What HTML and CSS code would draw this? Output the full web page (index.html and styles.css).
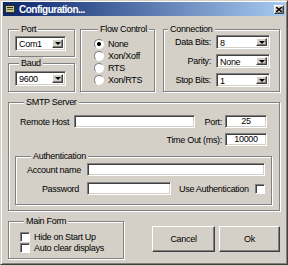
FILE: index.html
```html
<!DOCTYPE html>
<html lang="en">
<head>
    <meta charset="UTF-8">
    <title>Configuration...</title>
    <link rel="stylesheet" href="styles.css">
</head>
<body>
    <div class="window">
        <div class="titlebar">
            <svg class="app-icon" width="10" height="8" viewBox="0 0 10 8">
                <rect x="0.5" y="0.5" width="9" height="7" fill="#c8c89a" stroke="#303018"/>
                <rect x="2" y="2" width="6" height="1" fill="#303018"/>
                <rect x="2" y="4" width="6" height="1" fill="#606030"/>
            </svg>
            <span class="title">Configuration...</span>
            <span class="close-btn">
                <svg width="6" height="5" viewBox="0 0 6 5">
                    <path d="M0 0 L6 5 M6 0 L0 5" stroke="#000" stroke-width="1.4"/>
                </svg>
            </span>
        </div>

        <div class="client">
            <div class="top-row">
                <div class="col-left">
                    <fieldset class="group port-group">
                        <legend>Port</legend>
                        <div class="combo">
                            <span class="value">Com1</span>
                            <span class="drop"><i class="arrow"></i></span>
                        </div>
                    </fieldset>
                    <fieldset class="group baud-group">
                        <legend>Baud</legend>
                        <div class="combo">
                            <span class="value">9600</span>
                            <span class="drop"><i class="arrow"></i></span>
                        </div>
                    </fieldset>
                </div>

                <fieldset class="group flow-group">
                    <legend>Flow Control</legend>
                    <div class="option"><span class="radio on"></span>None</div>
                    <div class="option"><span class="radio"></span>Xon/Xoff</div>
                    <div class="option"><span class="radio"></span>RTS</div>
                    <div class="option"><span class="radio"></span>Xon/RTS</div>
                </fieldset>

                <fieldset class="group conn-group">
                    <legend>Connection</legend>
                    <div class="conn-row">
                        <label>Data Bits:</label>
                        <div class="combo small">
                            <span class="value">8</span>
                            <span class="drop"><i class="arrow"></i></span>
                        </div>
                    </div>
                    <div class="conn-row">
                        <label>Parity:</label>
                        <div class="combo small">
                            <span class="value">None</span>
                            <span class="drop"><i class="arrow"></i></span>
                        </div>
                    </div>
                    <div class="conn-row">
                        <label>Stop Bits:</label>
                        <div class="combo small">
                            <span class="value">1</span>
                            <span class="drop"><i class="arrow"></i></span>
                        </div>
                    </div>
                </fieldset>
            </div>

            <fieldset class="group smtp-group">
                <legend>SMTP Server</legend>
                <div class="smtp-row">
                    <label class="host-label">Remote Host</label>
                    <div class="edit host-edit"></div>
                    <label class="port-label">Port:</label>
                    <div class="edit num-edit">25</div>
                </div>
                <div class="smtp-row right">
                    <label>Time Out (ms):</label>
                    <div class="edit num-edit">10000</div>
                </div>

                <fieldset class="group auth-group">
                    <legend>Authentication</legend>
                    <div class="auth-row">
                        <label class="auth-label">Account name</label>
                        <div class="edit account-edit"></div>
                    </div>
                    <div class="auth-row">
                        <label class="auth-label pass">Password</label>
                        <div class="edit pass-edit"></div>
                        <label class="use-auth">Use Authentication</label>
                        <span class="check"></span>
                    </div>
                </fieldset>
            </fieldset>

            <div class="bottom-row">
                <fieldset class="group main-group">
                    <legend>Main Form</legend>
                    <div class="option"><span class="check"></span>Hide on Start Up</div>
                    <div class="option"><span class="check"></span>Auto clear displays</div>
                </fieldset>
                <div class="buttons">
                    <button class="btn cancel">Cancel</button>
                    <button class="btn ok">Ok</button>
                </div>
            </div>
        </div>
    </div>
</body>
</html>
```

FILE: styles.css
```css
body {
    margin: 0;
    background: #d4d0c8;
    font-family: "Liberation Sans", Arial, sans-serif;
    font-size: 9px;
    letter-spacing: -0.3px;
    white-space: nowrap;
    color: #000;
}
.window {
    width: 288px;
    height: 265px;
    box-sizing: border-box;
    background: #d4d0c8;
    border: 1px solid;
    border-color: #d4d0c8 #404040 #404040 #d4d0c8;
    box-shadow: inset 1px 1px #fff, inset -1px -1px #808080;
    padding: 1px 2px 2px 2px;
}
.titlebar {
    height: 14px;
    display: flex;
    align-items: center;
    padding: 0 1px 0 2px;
    background: linear-gradient(to right, #0a246a, #a6caf0);
}
.app-icon {
    margin-right: 4px;
}
.title {
    flex: 1;
    color: #fff;
    font-weight: bold;
    font-size: 10px;
    letter-spacing: -0.5px;
}
.close-btn {
    width: 10px;
    height: 9px;
    box-sizing: border-box;
    display: flex;
    align-items: center;
    justify-content: center;
    background: #d4d0c8;
    border: 1px solid;
    border-color: #fff #404040 #404040 #fff;
    box-shadow: inset -1px -1px #808080;
}

.client {
    padding: 7px 5px 0 5px;
}

/* group boxes */
.group {
    margin: 0;
    padding: 0;
    min-width: 0;
    box-sizing: border-box;
    border: 1px solid #808080;
    box-shadow: inset 1px 1px #fff, 1px 1px #fff;
}
legend {
    margin-left: 4px;
    padding: 0 2px;
    line-height: 12px;
    background: #d4d0c8;
}

.top-row {
    display: flex;
    height: 69px;
}
.col-left {
    width: 67px;
    display: flex;
    flex-direction: column;
}
.port-group {
    height: 34px;
    padding: 1px 0 0 6px;
}
.baud-group {
    height: 35px;
    padding: 2px 0 0 6px;
}
.flow-group {
    width: 75px;
    margin-left: 5px;
    padding: 3px 0 0 13px;
}
.conn-group {
    width: 117px;
    margin-left: 8px;
    padding: 0 9px 0 0;
}

/* combo boxes */
.combo {
    width: 51px;
    height: 15px;
    box-sizing: border-box;
    display: flex;
    padding: 2px;
    background: #fff;
    border: 1px solid;
    border-color: #808080 #fff #fff #808080;
    box-shadow: inset 1px 1px #404040, inset -1px -1px #d4d0c8;
}
.combo.small {
    width: 54px;
    height: 14px;
}
.value {
    flex: 1;
    padding-left: 1px;
    line-height: 10px;
}
.drop {
    width: 11px;
    box-sizing: border-box;
    display: flex;
    align-items: center;
    justify-content: center;
    background: #d4d0c8;
    border: 1px solid;
    border-color: #fff #404040 #404040 #fff;
    box-shadow: inset -1px -1px #808080;
}
.arrow {
    width: 0;
    height: 0;
    border-left: 3px solid transparent;
    border-right: 3px solid transparent;
    border-top: 3px solid #000;
}

/* radios and checks */
.option {
    height: 12px;
    display: flex;
    align-items: center;
}
.radio {
    width: 10px;
    height: 10px;
    box-sizing: border-box;
    border-radius: 50%;
    margin-right: 4px;
    background: #fff;
    border: 1px solid;
    border-color: #808080 #fff #fff #808080;
}
.radio.on {
    background: radial-gradient(circle, #000 1.7px, #fff 2.3px);
}
.check {
    width: 10px;
    height: 10px;
    box-sizing: border-box;
    background: #fff;
    border: 1px solid;
    border-color: #808080 #fff #fff #808080;
    box-shadow: inset 1px 1px #404040;
}

.conn-row {
    display: flex;
    align-items: center;
    margin-bottom: 5px;
}
.conn-row label {
    width: 47px;
    margin-right: 5px;
    text-align: right;
}

/* edits */
.edit {
    height: 13px;
    box-sizing: border-box;
    background: #fff;
    border: 1px solid;
    border-color: #808080 #fff #fff #808080;
    box-shadow: inset 1px 1px #404040, inset -1px -1px #d4d0c8;
    line-height: 11px;
    text-align: center;
}

.smtp-group {
    margin-top: 4px;
    height: 115px;
    padding: 7px 0 0 11px;
}
.smtp-row {
    display: flex;
    align-items: center;
    margin-bottom: 5px;
}
.smtp-row.right {
    justify-content: flex-end;
    padding-right: 12px;
    margin-bottom: 0;
}
.smtp-row.right label {
    margin-right: 3px;
}
.host-label {
    width: 54px;
}
.host-edit {
    width: 121px;
}
.port-label {
    width: 27px;
    margin-right: 3px;
    text-align: right;
}
.num-edit {
    width: 42px;
}

.auth-group {
    margin: 4px 7px 0 -5px;
    height: 55px;
    padding: 1px 6px 0 11px;
}
.auth-row {
    display: flex;
    align-items: center;
    margin-bottom: 6px;
}
.auth-label {
    width: 60px;
}
.auth-label.pass {
    text-align: right;
    padding-right: 8px;
    box-sizing: border-box;
}
.account-edit {
    flex: 1;
}
.pass-edit {
    width: 84px;
}
.use-auth {
    margin: 0 6px 0 8px;
}

.bottom-row {
    display: flex;
    margin-top: 4px;
}
.main-group {
    width: 116px;
    height: 44px;
    padding: 4px 0 0 11px;
}
.main-group .option {
    height: 11px;
}
.main-group .check {
    margin-right: 4px;
}
.buttons {
    display: flex;
    margin: 11px 0 0 28px;
}
.btn {
    height: 26px;
    box-sizing: border-box;
    padding: 0;
    font: inherit;
    letter-spacing: inherit;
    color: #000;
    background: #d4d0c8;
    border: 1px solid;
    border-color: #fff #404040 #404040 #fff;
    box-shadow: inset -1px -1px #808080;
}
.cancel {
    width: 63px;
}
.ok {
    width: 61px;
    margin-left: 4px;
}
```
